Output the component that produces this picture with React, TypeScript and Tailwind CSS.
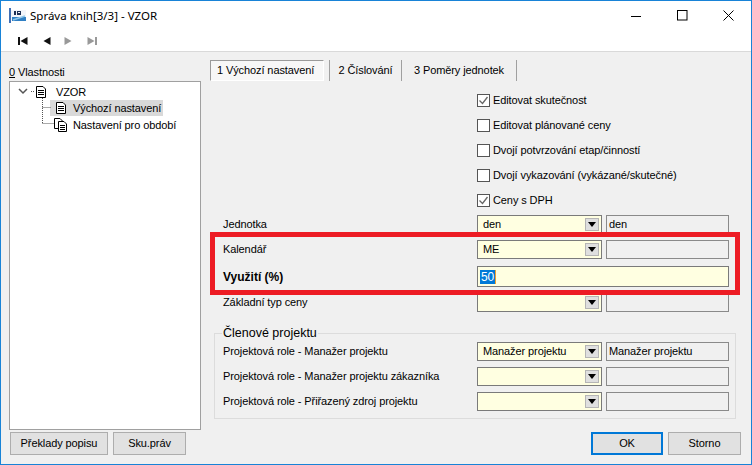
import React from 'react';

const DocIcon = () => (
  <svg width="10" height="12" viewBox="0 0 10 12" className="shrink-0">
    <path d="M0.5 0.5H7L9.5 3V11.5H0.5Z" fill="#fff" stroke="#000" />
    <path d="M2 4.5H8M2 6.5H8M2 8.5H8" stroke="#000" />
  </svg>
);

const DocsIcon = () => (
  <svg width="13" height="14" viewBox="0 0 13 14" className="shrink-0">
    <path d="M0.5 0.5H6L8.5 3V10.5H0.5Z" fill="#fff" stroke="#000" />
    <path d="M4.5 3.5H10L12.5 6V13.5H4.5Z" fill="#fff" stroke="#000" />
    <path d="M6 7.5H11M6 9.5H11M6 11.5H11" stroke="#000" />
  </svg>
);

const Logo = () => (
  <svg width="17" height="15" viewBox="0 0 17 15" className="shrink-0">
    <rect x="0" y="0" width="2" height="15" fill="#3f6fb5" />
    <rect x="2" y="2" width="15" height="11" fill="#f2f5fa" />
    <rect x="3" y="9" width="14" height="4" fill="#2f7fc4" />
    <path d="M4 12L16 8" stroke="#8fc6ea" strokeWidth="1.5" />
    <rect x="5" y="3" width="2" height="4" fill="#1c2f55" />
    <rect x="8" y="3" width="4" height="4" fill="#1c2f55" />
    <rect x="9" y="4" width="2" height="1" fill="#f2f5fa" />
  </svg>
);

const NavIcon = ({ dir, edge, color }: { dir: 'left' | 'right'; edge?: boolean; color: string }) => (
  <svg width="10" height="8" viewBox="0 0 10 8" className={dir === 'right' ? 'scale-x-[-1]' : ''}>
    {edge && <rect x="0" y="0" width="2" height="8" fill={color} />}
    <path d="M2.5 4L9.5 0V8Z" fill={color} />
  </svg>
);

const Check = ({ on, label }: { on?: boolean; label: string }) => (
  <div className="flex items-center h-[25px] pl-[276px] gap-[3px]">
    <span className="w-[13px] h-[13px] border border-[#555] bg-white flex items-center justify-center">
      {on && (
        <svg width="11" height="11" viewBox="0 0 11 11">
          <path d="M1.5 5.5L4.5 8.5L9.5 2" fill="none" stroke="#666" strokeWidth="1.3" />
        </svg>
      )}
    </span>
    <span>{label}</span>
  </div>
);

const Arrow = () => (
  <span className="w-[14px] h-[13px] bg-[#dfdfdf] border border-[#b5b5b5] flex items-center justify-center mr-[2px]">
    <span className="w-0 h-0 border-x-[4px] border-x-transparent border-t-[5px] border-t-black" />
  </span>
);

const Row = ({ label, value, side }: { label: string; value?: string; side?: string }) => (
  <div className="flex items-center h-[19px]">
    <span className="w-[254px] shrink-0">{label}</span>
    <div className="w-[125px] h-[19px] border border-[#7a7a7a] bg-[#ffffe1] flex items-center justify-between pl-[5px]">
      <span>{value}</span>
      <Arrow />
    </div>
    <div className="w-[123px] h-[19px] ml-[4px] border border-[#8a8a8a] bg-[#f0f0f0] flex items-center pl-[2px]">{side}</div>
  </div>
);

const Btn = ({ children, className = '' }: { children: React.ReactNode; className?: string }) => (
  <button className={`h-[23px] bg-[#e1e1e1] border border-[#adadad] flex items-center justify-center ${className}`}>{children}</button>
);

export default function App() {
  return (
    <div
      className="relative w-[752px] h-[465px] flex flex-col bg-[#f0f0f0] border border-[#1883d7] text-[11px] tracking-[-0.1px] leading-none text-black overflow-hidden"
      style={{ fontFamily: '"Liberation Sans", sans-serif' }}
    >
      {/* Title bar */}
      <header className="h-[29px] shrink-0 bg-white flex items-center pl-[8px]">
        <Logo />
        <span className="ml-[4px] text-[11.5px] tracking-normal" style={{ fontFamily: '"Noto Sans", sans-serif' }}>Správa knih[3/3] - VZOR</span>
        <div className="ml-auto flex items-center">
          <svg width="12" height="12" viewBox="0 0 12 12" className="mr-[35px]"><path d="M1 6.5H11" stroke="#000" /></svg>
          <svg width="11" height="11" viewBox="0 0 11 11" className="mr-[35px]"><rect x="0.5" y="0.5" width="9.5" height="9.5" fill="none" stroke="#000" /></svg>
          <svg width="11" height="11" viewBox="0 0 11 11" className="mr-[17px]"><path d="M0.5 0.5L10.5 10.5M10.5 0.5L0.5 10.5" stroke="#000" /></svg>
        </div>
      </header>

      {/* Toolbar */}
      <div className="h-[22px] shrink-0 bg-white border-b border-[#d9d9d9] flex items-center pl-[17px] gap-[13px]">
        <NavIcon dir="left" edge color="#111" />
        <NavIcon dir="left" color="#111" />
        <NavIcon dir="right" color="#999" />
        <NavIcon dir="right" edge color="#999" />
      </div>

      <div className="flex-1 flex min-h-0">
        {/* Left side */}
        <aside className="w-[200px] shrink-0 pl-[8px] flex flex-col">
          <div className="h-[29px] flex items-end pb-[3px]"><span><u>0</u> Vlastnosti</span></div>
          <div className="relative h-[349px] border border-[#a0a0a0] bg-white pt-[2px]">
            <svg width="50" height="50" className="absolute left-0 top-0">
              <path d="M9 7L13 11L17 7" fill="none" stroke="#555" strokeWidth="1.5" />
              <path d="M21 9.5H25M32.5 16V41.5M32.5 25.5H41M32.5 41.5H44" stroke="#555" strokeDasharray="1 1" />
            </svg>
            <div className="h-[16px] flex items-center pl-[26px] gap-[10px]"><DocIcon /><span>VZOR</span></div>
            <div className="h-[16px] w-[113px] ml-[40px] bg-[#d9d9d9] flex items-center pl-[6px] gap-[7px]"><DocIcon /><span>Výchozí nastavení</span></div>
            <div className="h-[16px] flex items-center pl-[44px] gap-[6px] mt-[1px]"><DocsIcon /><span>Nastavení pro období</span></div>
          </div>
          <div className="flex mt-[2px] ml-[1px] gap-[5px]">
            <Btn className="w-[98px]">Překlady popisu</Btn>
            <Btn className="w-[73px]">Sku.práv</Btn>
          </div>
        </aside>

        {/* Right side */}
        <main className="flex-1 flex flex-col min-w-0">
          <div className="flex items-stretch h-[21px] mt-[8px] ml-[9px]">
            <div className="w-[114px] border border-[#9a9a9a] border-b-white border-r-white bg-[#f7f7f7] flex items-center pl-[6px]">1 Výchozí nastavení</div>
            <div className="ml-[5px] border-r border-[#a0a0a0] w-0" />
            <div className="w-[72px] border-r border-[#a0a0a0] flex items-center justify-center">2 Číslování</div>
            <div className="w-[115px] border-r border-[#a0a0a0] flex items-center justify-center">3 Poměry jednotek</div>
          </div>
          <div className="mt-[7px]">
            <Check on label="Editovat skutečnost" />
            <Check label="Editovat plánované ceny" />
            <Check label="Dvojí potvrzování etap/činností" />
            <Check label="Dvojí vykazování (vykázané/skutečné)" />
            <Check on label="Ceny s DPH" />
          </div>
          <div className="pl-[22px] mt-[2px] flex flex-col">
            <Row label="Jednotka" value="den" side="den" />
            <div className="h-[6px]" />
            <Row label="Kalendář" value="ME" />
            <div className="h-[7px]" />
            <div className="flex items-center h-[21px]">
              <span className="w-[254px] shrink-0 font-bold text-[12px] tracking-normal">Využití (%)</span>
              <div className="w-[252px] h-[21px] border border-[#7a7a7a] bg-[#ffffe1] flex items-center pl-[2px]">
                <span className="bg-[#0078d7] text-white text-[12px] h-[14px] flex items-center px-[1px] border-r border-r-[#f0a030]">50</span>
              </div>
            </div>
            <div className="h-[6px]" />
            <Row label="Základní typ ceny" />
          </div>
          <fieldset className="mt-[14px] ml-[13px] w-[522px] h-[93px] border border-[#dcdcdc] pl-[8px] relative">
            <legend className="-ml-[1px] px-[1px] text-[12.5px] tracking-normal leading-[14px]">Členové projektu</legend>
            <div className="flex flex-col gap-[6px] pt-[2px]">
              <Row label="Projektová role - Manažer projektu" value="Manažer projektu" side="Manažer projektu" />
              <Row label="Projektová role - Manažer projektu zákazníka" />
              <Row label="Projektová role - Přiřazený zdroj projektu" />
            </div>
          </fieldset>
          <div className="flex justify-end mt-[auto] mb-[9px] pr-[10px] gap-[5px]">
            <Btn className="w-[72px] !border-2 !border-[#0078d7]">OK</Btn>
            <Btn className="w-[73px]">Storno</Btn>
          </div>
        </main>
      </div>

      {/* Red annotation over the form */}
      <div className="absolute left-[209px] top-[231px] w-[530px] h-[63px] border-[5px] border-[#ed1c24] pointer-events-none" />
    </div>
  );
}
